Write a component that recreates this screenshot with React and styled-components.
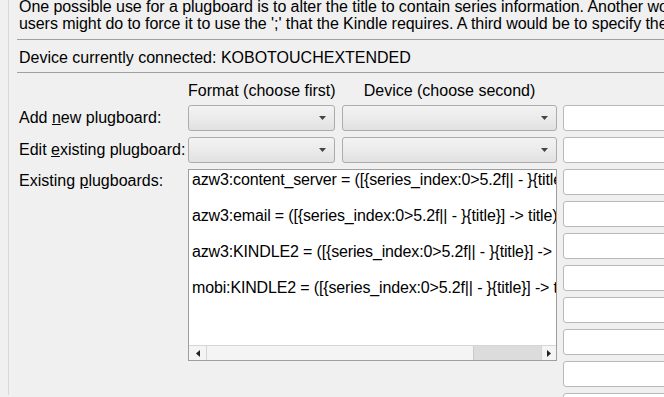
import React from "react";
import styled, { createGlobalStyle } from "styled-components";

const GlobalStyle = createGlobalStyle`
  html, body {
    margin: 0;
    padding: 0;
    background: #f0f0f0;
  }
  body {
    font-family: "Liberation Sans", Arial, sans-serif;
    font-size: 16px;
    color: #000;
  }
`;

const Page = styled.div`
  width: 664px;
  height: 397px;
  overflow: hidden;
  background: #f0f0f0;
`;

const Frame = styled.div`
  margin-left: 8px;
  border-left: 1px solid #d9d9d9;
  padding-left: 8px;
  width: 1000px;
  height: 397px;
`;

const Help = styled.div`
  margin-top: -2px;
  padding-left: 2px;
  line-height: 17px;
  white-space: nowrap;
  padding-bottom: 7px;
  letter-spacing: -0.06px;
`;

const Rule = styled.div`
  height: 0;
  border-top: 1px solid #a0a0a0;
`;

const Connected = styled.div`
  padding-left: 2px;
  line-height: 18px;
  padding-top: 9px;
  padding-bottom: 5px;
  white-space: nowrap;
`;

const Board = styled.div`
  display: grid;
  grid-template-columns: 164px 147px 215px 200px;
  grid-template-rows: 17px 26px 26px 192px;
  column-gap: 7px;
  row-gap: 6px;
  padding-top: 9px;
`;

const Heading = styled.div`
  grid-column: ${(p) => p.$col};
  grid-row: 1;
  line-height: 17px;
  text-align: center;
  white-space: nowrap;
`;

const Label = styled.div`
  grid-column: 1;
  grid-row: ${(p) => p.$row};
  padding-left: 2px;
  line-height: 18px;
  white-space: nowrap;
  align-self: ${(p) => (p.$top ? "start" : "center")};
  padding-top: ${(p) => (p.$top ? "3px" : "0")};
`;

const Combo = styled.div`
  grid-column: ${(p) => p.$col};
  grid-row: ${(p) => p.$row};
  box-sizing: border-box;
  height: 26px;
  border: 1px solid #acacac;
  border-radius: 3px;
  background: linear-gradient(to bottom, #f3f3f3 0%, #ebebeb 50%, #e1e1e1 100%);
  display: flex;
  align-items: center;
  justify-content: flex-end;
  padding-right: 8px;
`;

const Side = styled.div`
  grid-column: 4;
  grid-row: 2 / span 3;
  display: flex;
  flex-direction: column;
  gap: 6px;
  margin-left: -1px;
`;

const TextBox = styled.div`
  box-sizing: border-box;
  flex: 0 0 26px;
  height: 26px;
  background: #fff;
  border: 1px solid #b9b9b9;
  border-radius: 3px;
`;

const List = styled.div`
  grid-column: 2 / span 2;
  grid-row: 4;
  box-sizing: border-box;
  border: 1px solid #9e9e9e;
  background: #fff;
  display: flex;
  flex-direction: column;
  overflow: hidden;
`;

const Items = styled.div`
  flex: 1;
  overflow: hidden;
  padding: 1px 0 0 3px;
`;

const Item = styled.div`
  height: 36px;
  line-height: 18px;
  white-space: pre;
  letter-spacing: -0.15px;
`;

const HScroll = styled.div`
  flex: 0 0 14px;
  display: flex;
  border-top: 1px solid #d6d6d6;
  background: #f4f4f4;
`;

const Arrow = styled.div`
  flex: 0 0 ${(p) => p.$w}px;
  display: flex;
  align-items: center;
  justify-content: center;
  border-${(p) => (p.$side === "left" ? "right" : "left")}: 1px solid #d6d6d6;
`;

const Track = styled.div`
  flex: 1;
  display: flex;
`;

const Thumb = styled.div`
  margin-left: auto;
  width: 67px;
  background: #dcdcdc;
  border-left: 1px solid #cbcbcb;
`;

const DownArrow = () => (
  <svg width="7" height="4" viewBox="0 0 7 4">
    <path d="M0 0H7L3.5 4Z" fill="#444" />
  </svg>
);

const SideArrow = ({ dir }) => (
  <svg width="4" height="7" viewBox="0 0 4 7">
    <path d={dir === "left" ? "M4 0V7L0 3.5Z" : "M0 0V7L4 3.5Z"} fill="#222" />
  </svg>
);

const plugboards = [
  "azw3:content_server = ([{series_index:0>5.2f|| - }{title}] -> title)",
  "azw3:email = ([{series_index:0>5.2f|| - }{title}] -> title)",
  "azw3:KINDLE2 = ([{series_index:0>5.2f|| - }{title}] -> title)",
  "mobi:KINDLE2 = ([{series_index:0>5.2f|| - }{title}] -> title)",
];

export default function App() {
  return (
    <Page>
      <GlobalStyle />
      <Frame>
        <Help>
          One possible use for a plugboard is to alter the title to contain series information. Another would be to change the author sort, something that mobi
          <br />
          users might do to force it to use the ';' that the Kindle requires. A third would be to specify the language.
        </Help>
        <Rule />
        <Connected>Device currently connected: KOBOTOUCHEXTENDED</Connected>
        <Rule />
        <Board>
          <Heading $col={2}>Format (choose first)</Heading>
          <Heading $col={3}>Device (choose second)</Heading>

          <Label $row={2}>
            Add <u>n</u>ew plugboard:
          </Label>
          <Combo $row={2} $col={2}>
            <DownArrow />
          </Combo>
          <Combo $row={2} $col={3}>
            <DownArrow />
          </Combo>

          <Label $row={3}>
            Edit <u>e</u>xisting plugboard:
          </Label>
          <Combo $row={3} $col={2}>
            <DownArrow />
          </Combo>
          <Combo $row={3} $col={3}>
            <DownArrow />
          </Combo>

          <Label $row={4} $top>
            Existing <u>p</u>lugboards:
          </Label>
          <List>
            <Items>
              {plugboards.map((p) => (
                <Item key={p}>{p}</Item>
              ))}
            </Items>
            <HScroll>
              <Arrow $w={17} $side="left">
                <SideArrow dir="left" />
              </Arrow>
              <Track>
                <Thumb />
              </Track>
              <Arrow $w={14} $side="right">
                <SideArrow dir="right" />
              </Arrow>
            </HScroll>
          </List>

          <Side>
            {Array.from({ length: 10 }, (_, i) => (
              <TextBox key={i} />
            ))}
          </Side>
        </Board>
      </Frame>
    </Page>
  );
}
